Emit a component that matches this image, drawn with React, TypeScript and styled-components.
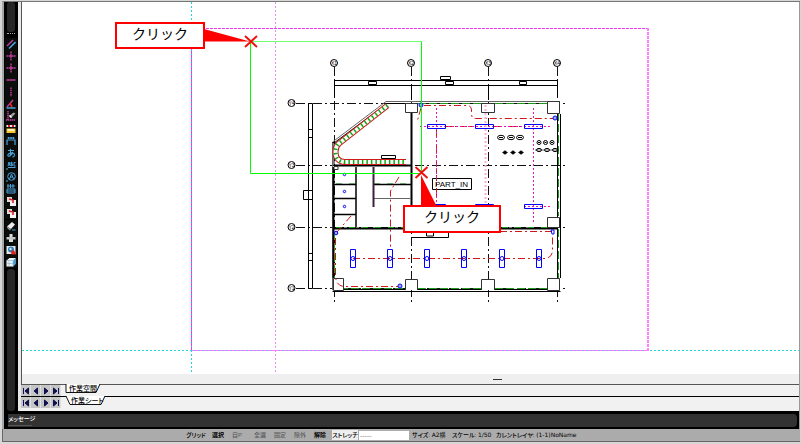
import React from "react";
import styled, { createGlobalStyle, css } from "styled-components";

const GlobalStyle = createGlobalStyle`
  * { box-sizing: border-box; }
  html, body { margin: 0; padding: 0; }
  body {
    font-family: "Liberation Sans", "Noto Sans CJK JP", sans-serif;
    font-feature-settings: "palt";
    background: #d6d6d6;
  }
`;

const Window = styled.div`
  display: flex;
  flex-direction: column;
  min-height: 100vh;
  padding: 1px 1px 2px 2px;
  background: #d6d6d6;
`;

const Workspace = styled.div`
  display: flex;
  flex: 1;
  background: #000;
  border-top: 1px solid #777;
  border-left: 2px solid #a3a7a8;
`;

const Toolbar = styled.div`
  display: flex;
  flex-direction: column;
  flex: none;
  width: 14px;
  gap: 1px;
  align-items: center;
  background: #000;
`;

const ToolRail = styled.div<{ $grow?: boolean }>`
  width: 8px;
  height: 30px;
  border-radius: 3px;
  background: #262626;
  ${(p) => p.$grow && css`flex: 1; height: auto;`}
`;

const Grip = styled.div`
  width: 8px;
  height: 4px;
  border-top: 1px dotted #aaa;
`;

const ToolGroup = styled.div`
  display: flex;
  flex-direction: column;
  background: #0b0d0b;
`;

const ToolButton = styled.button`
  display: flex;
  align-items: center;
  justify-content: center;
  width: 12px;
  height: 12px;
  padding: 0;
  border: 0;
  background: transparent;
`;

const Main = styled.main`
  display: flex;
  flex: 1;
  flex-direction: column;
  min-width: 0;
  background: #f0f0f0;
  border-left: 3px solid #e8e8e8;
  border-right: 1px solid #999;
`;

const Canvas = styled.section`
  position: relative;
  flex: 1;
  min-height: 372px;
  overflow: hidden;
  background: #fff;
  border-left: 1px solid #555;
`;

const Drawing = styled.svg`
  position: absolute;
  inset: 0;
  display: block;
  width: 100%;
  height: 100%;
`;

const Callout = styled.div<{ $x: number; $y: number; $w: number; $h: number }>`
  position: absolute;
  left: ${(p) => p.$x}px;
  top: ${(p) => p.$y}px;
  width: ${(p) => p.$w}px;
  height: ${(p) => p.$h}px;
  display: flex;
  align-items: center;
  justify-content: center;
  padding-bottom: 4px;
  border: 2px solid #f00;
  background: #fff;
  color: #000;
  font-feature-settings: normal;
  font-size: 14px;
  line-height: 20px;
`;

const Splitter = styled.div`
  display: flex;
  justify-content: center;
  align-items: center;
  height: 10px;
  padding-left: 174px;
  background: #efefef;
  border-left: 1px solid #555;
`;

const SplitterHandle = styled.div`
  width: 9px;
  height: 1px;
  background: #333;
`;

const SheetRow = styled.div<{ $tall?: boolean }>`
  display: flex;
  height: ${(p) => (p.$tall ? 15 : 12)}px;
  border-top: 1px solid ${(p) => (p.$tall ? "#000" : "#555")};
  background: #f1f1f1;
`;

const NavButton = styled.button`
  display: flex;
  align-items: center;
  justify-content: center;
  width: 10px;
  height: 11px;
  padding: 0;
  border: 0;
  border-right: 1px solid #dedede;
  background: #c5c5c5;
`;

const SheetTab = styled.button<{ $w: number; $indent: number }>`
  position: relative;
  width: ${(p) => p.$w}px;
  height: 10px;
  margin: -1px 0 0 4px;
  padding: 0 0 0 ${(p) => p.$indent}px;
  border: 0;
  background: transparent;
  color: #000;
  font-family: inherit;
  font-feature-settings: inherit;
  font-size: 7px;
  font-weight: 500;
  line-height: 10px;
  text-align: left;
  white-space: nowrap;
  svg {
    position: absolute;
    inset: 0;
  }
  span {
    position: relative;
  }
`;

const MessageBar = styled.div`
  display: flex;
  height: 18px;
  padding: 3px 2px 2px 4px;
  background: #000;
  border-left: 2px solid #a3a7a8;
  border-right: 1px solid #999;
`;

const MessagePanel = styled.div`
  flex: 1;
  border-radius: 0 4px 4px 0;
  background: #323232;
  color: #fff;
  font-size: 6px;
  font-weight: 500;
  line-height: 11px;
`;

const MessageTitle = styled.span`
  display: inline-block;
  width: 24px;
  height: 12px;
  border-bottom: 1px solid #555;
  white-space: nowrap;
`;

const StatusBar = styled.footer`
  display: flex;
  align-items: center;
  height: 13px;
  padding-left: 183px;
  background: #ababab;
  border-bottom: 1px solid #666;
  border-left: 1px solid #666;
  font-size: 6px;
  line-height: 10px;
`;

const Mode = styled.button<{ $w: number; $tone?: "off" | "bold" | "on" }>`
  flex: none;
  width: ${(p) => p.$w}px;
  height: 10px;
  padding: 0;
  border: 0;
  background: ${(p) => (p.$tone === "on" ? "#eeeeee" : "transparent")};
  color: ${(p) => (p.$tone === "off" ? "#5c5c5c" : "#000")};
  font-family: inherit;
  font-feature-settings: inherit;
  font-size: 6px;
  font-weight: ${(p) => (p.$tone === "bold" ? 700 : 500)};
  line-height: 10px;
  text-align: ${(p) => (p.$tone === "on" ? "center" : "left")};
  white-space: nowrap;
`;

const Entry = styled.input`
  width: 50px;
  height: 9px;
  margin: 0 3px 0 1px;
  padding: 0 1px;
  border: 0;
  background: #fff;
  color: #888;
  font-family: inherit;
  font-size: 7px;
`;

const Readout = styled.span<{ $w: number }>`
  flex: none;
  width: ${(p) => p.$w}px;
  color: #000;
  font-weight: 500;
  white-space: nowrap;
  b {
    font-family: "DejaVu Sans", "Noto Sans CJK JP", sans-serif;
    font-weight: 400;
    font-size: 6px;
  }
`;

const M = "#c03fa0";
const B = "#4aa3dc";

type Tool = { label: string; art: React.ReactNode };

const copyArt = (
  <>
    <path d="M1 1h5v5H1z" fill="#ddd" />
    <path d="M4 4h6v6H4z" fill="#f4f4f4" />
    <path d="M3 3l4 1v3" stroke="#e02020" strokeWidth="1.6" fill="none" />
  </>
);

const toolGroups: Tool[][] = [
  [
    { label: "平行線", art: <><path d="M1 7L7 1" stroke={M} strokeWidth="1.4" /><path d="M3 9.500L9.500 3" stroke={B} strokeWidth="1.600" /></> },
    { label: "十字線", art: <path d="M.5 5h9M5 .5v9" stroke={M} strokeWidth="1.400" strokeDasharray="2 .4" /> },
    { label: "交点", art: <path d="M.5 5h9M5 .5v9" stroke={M} strokeWidth="1.400" strokeDasharray="2 .4" /> },
    { label: "水平線", art: <path d="M.5 5h9" stroke={M} strokeWidth="1.400" /> },
    { label: "垂直線", art: <path d="M5 .5v9" stroke={M} strokeWidth="1.400" strokeDasharray="1.600 .6" /> },
    { label: "角度線", art: <><path d="M1 8L7 1" stroke={M} strokeWidth="1.400" /><path d="M4 4l2 4" stroke="#e02020" strokeWidth="1.800" /><path d="M.5 9h9" stroke={B} strokeWidth="1.500" /></> },
    { label: "線消去", art: <><path d="M2 0v9M0 9h9" stroke={M} strokeWidth="1.400" strokeDasharray="1.500 .5" /><path d="M3 5l2 2 4.500-4.500-2-1z" fill="#9a9a9a" /><path d="M3 5l2 2 1-1-2-2z" fill="#fff" /></> },
  ],
  [
    { label: "寸法帯", art: <><path d="M.5 2h9" stroke="#eee" strokeWidth="2" /><path d="M2 2h2M6 2h2" stroke="#e02020" strokeWidth="2" /><path d="M.5 4.500h9v4.500h-9z" fill="#f7c528" /><path d="M1.500 5h7v2h-7z" fill="#fff3c0" /></> },
    { label: "寸法", art: <path d="M1 9V4h8v5M2.500 1v2M5 1v2M7.500 1v2M1.500 2h7" stroke={B} strokeWidth="1.200" fill="none" /> },
    { label: "文字", art: <path d="M2 2.500h6M4.500 .8v7M7 4C6 7 3 9 2 7.800S4 4.500 6.500 5s3 3 0 4.200" stroke={B} strokeWidth="1.100" fill="none" /> },
    { label: "文字列", art: <path d="M2 6l1-4 1 4M5 6V2l1.500 1L5 4l2 1-2 1M9.500 2.500L8 2.500v3.500h1.500M0 9h2M2 7.500h7.500" stroke={B} strokeWidth="1" fill="none" /> },
    { label: "丸文字", art: <><circle cx="5.500" cy="4.500" r="3.800" stroke={B} fill="none" /><path d="M3.500 7l2-5 2 5M4 5h3M0 9h2" stroke={B} fill="none" /></> },
    { label: "表", art: <path d="M2 0v4M4.500 0v4M7 0v4M1 2h8M1 5h8v4H1zM1 7h8" stroke={B} strokeWidth="1" fill="none" /> },
    { label: "複写", art: copyArt },
    { label: "移動", art: copyArt },
  ],
  [
    { label: "消去", art: <><path d="M1 5.500L6 1l3 2.500L5 8z" fill="#eee" /><path d="M1 5.500L5 8l-1 1.500-2.500-2z" fill="#999" /><path d="M6 9h3.500" stroke={B} /></> },
    { label: "印刷", art: <><path d="M3.500 1h3v3h-3zM3 6h4v3H3z" fill="#ddd" /><path d="M.5 4h9v2.500h-9z" fill="#c4c4c4" /></> },
    { label: "表示", art: <><path d="M.5 1h9v8h-9z" fill="#e8e8e8" /><circle cx="5" cy="4.500" r="3" fill="#2e7fb8" /><circle cx="4.500" cy="4" r="1.200" fill="#bfe3f5" /><path d="M5 6.500L8 5l2 4.500H5.500z" fill="#e02020" /></> },
    { label: "立体", art: <><path d="M.5 3.500l3-2.500h6v6L7 9.500H.5z" fill="#f2f2f2" /><path d="M7 3.500L9.500 1v6L7 9.500z" fill="#3aa0dc" /><path d="M.5 3.500H7v6M3 3.500v6M.5 6.500H7" stroke="#8cb9d3" strokeWidth=".7" fill="none" /></> },
  ],
];

const navArt = [
  <path key="f" d="M1.500 1v6M6.500 1v6L3 4z" />,
  <path key="p" d="M5.500 1v6L2 4z" />,
  <path key="n" d="M2.500 1v6L6 4z" />,
  <path key="l" d="M6.500 1v6M1.500 1v6L5 4z" />,
];
const navLabels = ["最初", "前", "次", "最後"];

function SheetNav() {
  return (
    <>
      {navArt.map((art, i) => (
        <NavButton key={i} aria-label={navLabels[i]}>
          <svg width="8" height="8" fill="#101050" stroke="#101050">{art}</svg>
        </NavButton>
      ))}
    </>
  );
}

const columns = [
  { x: 334, n: "X1" }, { x: 411, n: "X2" }, { x: 488, n: "X3" }, { x: 557, n: "X4" },
];
const rows = [
  { y: 103, n: "Y4" }, { y: 165, n: "Y3" }, { y: 227, n: "Y2" }, { y: 288, n: "Y1" },
];
const BAND = "M387.500 105.500L339 143.500C336 146 335.500 149 335.500 152C335.500 158 339 162 345 162H406";

function Plan() {
  return (
    <g fill="none" stroke="#000" strokeWidth="1">
      <g stroke="#111" strokeDasharray="9 3 2 3">
        {columns.map((c) => <path key={c.n} d={`M${c.x + 0.5} 67V302`} />)}
        {rows.map((r) => <path key={r.n} d={`M296 ${r.y + 0.5}H565`} />)}
      </g>
      <g fill="#fff">
        {columns.map((c) => <circle key={c.n} cx={c.x} cy="63" r="3.500" />)}
        {rows.map((r) => <circle key={r.n} cx="291.500" cy={r.y} r="3.500" />)}
      </g>
      <g fill="#000" stroke="none" fontSize="5" textAnchor="middle">
        {columns.map((c) => <text key={c.n} x={c.x} y="65">{c.n}</text>)}
        {rows.map((r) => <text key={r.n} x="291.500" y={r.y + 2}>{r.n}</text>)}
      </g>

      <path d="M334.500 97V80.500H557.500V97M334.500 85.500H557.500M411.500 85V100M488.500 85V100" />
      <path d="M368.500 81.500h8v3h-8zM445.500 81.500h8v3h-8zM519.500 81.500h7v3h-7zM440.500 76.500h10v3h-10z" fill="#fff" />
      <path d="M308.500 103.500h4v185h-4zM308.500 129.500h4v8h-4zM303.500 190.500h5v9h-5zM308.500 190.500h4v9h-4zM308.500 253.500h4v7h-4z" />

      <path d="M560 101.500H386L332.500 142V290" stroke="#666" />
      <path d="M557 103.500H387L334 143V165" />
      <path d="M332.500 142.500h3M332.500 291.500H560.500M344 289.500H547M559 101V113M560.500 114V278M557.500 113V288" />
      <path d="M333.500 167V278" strokeWidth="2" />
      <path d="M418 103.500H481M495 103.500H547M340 288.500H405M418 288.500H481M495 288.500H547M558.500 113V216M558.500 229V278M334.500 232V286" stroke="#199b19" strokeDasharray="8 3" />

      <path d="M334 165.500H411M334 228.500H557M411.500 103V228" strokeWidth="2" />
      <path d="M336 227.500H405M502 227.500H547M336 184H356M374 184H411" stroke="#199b19" strokeDasharray="6 7" />
      <path d="M356 167V227M334 184.500H356M334 198.500H356M334 214.500H356M374 184.500H411" strokeWidth="1.500" />
      <path d="M374 198.500H411" stroke="#666" />
      <path d="M373.500 167V207" stroke="#39203d" strokeWidth="2" />
      <path d="M405.500 103.500h12v9h-12zM481.500 103.500h13v9h-13zM547.500 101.500h12v12h-12zM547.500 217.500h12v10h-12zM547.500 278.500h12v12h-12zM405.500 290V279.500h12V290M481.500 290V279.500h13V290M333.500 278.500h10v12h-10zM334 166.500h4v3h-4z" fill="#fff" stroke="#333" />
      <path d="M381.500 155.500h14v3h-14z" />
      <path d="M411 237.500H448.500V232M426.500 232h7v4h-7z" />

      <path d={BAND} stroke="#d01818" strokeWidth="6" />
      <path d={BAND} stroke="#fff" strokeWidth="4" />
      <path d={BAND} stroke="#12a812" strokeWidth="4" strokeDasharray="1.500 3" />

      <g stroke="#d01818" strokeDasharray="7 3 2 3">
        <path d="M424 105.500H467Q471.500 105.500 471.500 110V114Q471.500 118.500 476 118.500H553M421 108L417 122" />
        <path d="M445 126.500H475M494 126.500H524M436.500 130V224" />
        <path d="M399 177L390.500 191V250M351 216L337 232M335.500 238V276Q336 286.500 345 286.500H398" />
        <path d="M353 258.500H546Q552.500 257 552.500 250V236M500 231.500H552" />
      </g>
      <g stroke="#e815b5" strokeDasharray="2 2">
        <path d="M420 126.500H550M436.500 108V224M533.500 108V222M524 206.500H550" />
        <path d="M485.500 105V205" stroke="#ffabd9" strokeWidth="2" />
      </g>

      <g stroke="#0000ff">
        {[427, 475, 524].map((x) => <path key={x} d={`M${x + 0.5} 124.500h18v4h-18zM${x + 0.5} 204.500h18v4h-18z`} />)}
        {[353, 390, 427, 464, 502, 539].map((x) => (
          <g key={x}><path d={`M${x - 2.5} 249.500h5v18h-5z`} /><circle cx={x} cy="258.500" r="2" /></g>
        ))}
        {[174, 191, 206].map((y) => <circle key={y} cx="344.500" cy={y + 0.5} r="1.200" />)}
        <g fill="#9db4ff">
          <circle cx="421" cy="105" r="2" /><circle cx="555" cy="118" r="2" />
          <circle cx="336" cy="233" r="1.800" /><circle cx="400" cy="286" r="2" />
        </g>
        <path d="M551 230h3v4h-2z" />
      </g>

      <g strokeWidth="1">
        {[501, 511, 520].map((x) => <g key={x}><ellipse cx={x} cy="137.500" rx="3.500" ry="2.200" /><path d={`M${x - 2} 137.500h4`} /></g>)}
        {[505, 513, 521].map((x) => <g key={x}><circle cx={x} cy="152.500" r="1.500" fill="#000" /><path d={`M${x - 3} 152.500h6`} strokeWidth=".6" /></g>)}
        {[539, 545.5, 552].map((x) => <g key={x}><circle cx={x} cy="142.500" r="2" /><path d={`M${x - 1} 142.500h2`} /></g>)}
        {[539, 547, 555].map((x) => <g key={x}><ellipse cx={x} cy="150" rx="2.500" ry="1.600" /><path d={`M${x - 4} 150h8`} strokeWidth=".6" /></g>)}
      </g>

      <path d="M432.500 178.500h39v11h-39z" fill="#fff" />
      <path d="M436.500 178V190" stroke="#d01818" strokeDasharray="3 2" />
      <text x="435" y="187" fill="#000" stroke="none" fontSize="8">PART_IN</text>
    </g>
  );
}

export default function App() {
  return (
    <>
      <GlobalStyle />
      <Window>
        <Workspace>
          <Toolbar role="toolbar" aria-label="作図ツール">
            <ToolRail />
            <Grip />
            {toolGroups.map((group, i) => (
              <ToolGroup key={i}>
                {group.map((t) => (
                  <ToolButton key={t.label} aria-label={t.label}>
                    <svg width="10" height="10" fill="none">{t.art}</svg>
                  </ToolButton>
                ))}
              </ToolGroup>
            ))}
            <ToolRail $grow />
          </Toolbar>
          <Main>
            <Canvas>
              <Drawing>
                <g transform="translate(-22 -2)">
                  <g fill="none" strokeWidth="1">
                    <path d="M22 350.500H2000M191.500 2V2000" stroke="#20d8d8" strokeDasharray="2 2" />
                    <path d="M275.500 2V375" stroke="#f08cf0" strokeDasharray="2 2" />
                    <path d="M191.500 350V28.500H648" stroke="#ee35ee" strokeDasharray="3 1" />
                    <path d="M192 350.500H648" stroke="#ff78ff" strokeDasharray="3 1" />
                    <path d="M648 28V351" stroke="#ff7dff" strokeWidth="2" strokeDasharray="3 1" />
                  </g>
                  <Plan />
                  <path d="M250.500 41V173.500H421.500V41" fill="none" stroke="#00ff00" />
                  <path d="M250 41.500H422" stroke="#70ff70" />
                  <path d="M204 29L250 41.500H204zM421 175V207H437z" fill="#f00" />
                  <path d="M245 36l12 11M257 36l-12 11M415.500 167l12 11M427.500 167l-12 11" stroke="#f01010" strokeWidth="2" />
                </g>
              </Drawing>
              <Callout $x={93} $y={20} $w={90} $h={27}>クリック</Callout>
              <Callout $x={381} $y={203} $w={98} $h={28}>クリック</Callout>
            </Canvas>
            <Splitter><SplitterHandle /></Splitter>
            <SheetRow>
              <SheetNav />
              <SheetTab $w={36} $indent={4}>
                <svg width="36" height="10"><path d="M1 0V8.500H31L35 0" fill="#fff" stroke="#111" /></svg>
                <span>作業空間</span>
              </SheetTab>
            </SheetRow>
            <SheetRow $tall>
              <SheetNav />
              <SheetTab $w={41} $indent={6}>
                <svg width="41" height="10"><path d="M1 0L5 8.500H36L40 0" fill="#fff" stroke="#111" /></svg>
                <span>作業シート</span>
              </SheetTab>
            </SheetRow>
          </Main>
        </Workspace>
        <MessageBar>
          <MessagePanel><MessageTitle>メッセージ</MessageTitle></MessagePanel>
        </MessageBar>
        <StatusBar>
          <Mode $w={26}>グリッド</Mode>
          <Mode $w={20} $tone="bold">選択</Mode>
          <Mode $w={22} $tone="off">自P</Mode>
          <Mode $w={20} $tone="off">全選</Mode>
          <Mode $w={20} $tone="off">固定</Mode>
          <Mode $w={20} $tone="off">除外</Mode>
          <Mode $w={18} $tone="bold">解除</Mode>
          <Mode $w={26} $tone="on">ストレッチ</Mode>
          <Entry aria-label="線種" defaultValue="-----" />
          <Readout $w={40}>サイズ: <b>A2横</b></Readout>
          <Readout $w={44}>スケール: <b>1/50</b></Readout>
          <Readout $w={90}>カレントレイヤ: <b>(1-1)NoName</b></Readout>
        </StatusBar>
      </Window>
    </>
  );
}
